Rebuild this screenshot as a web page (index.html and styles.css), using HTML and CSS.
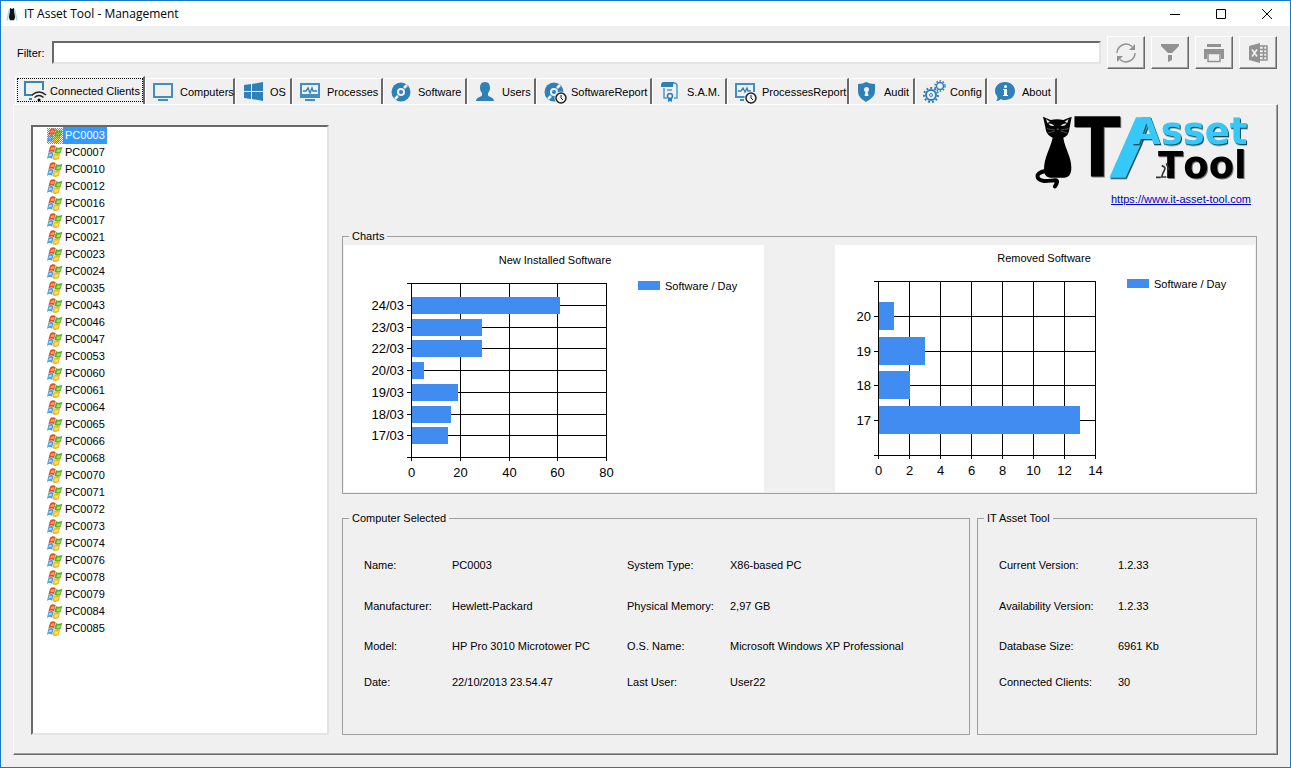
FILE: index.html
```html
<!DOCTYPE html>
<html lang="en">
<head>
<meta charset="utf-8">
<title>IT Asset Tool - Management</title>
<link rel="stylesheet" href="styles.css">
<script src="app.js" defer></script>
</head>
<body>
<svg class="defs" width="0" height="0" aria-hidden="true">
  <defs>
    <symbol id="flag" viewBox="0 0 48 48">
      <path fill="#e0501f" d="M9 5c6-5 12-5 17-1l-5 18c-5-4-11-3-17 1z"/>
      <path fill="#55b020" d="M27 6c6 4 12 3 19-1l-5 18c-7 5-13 4-19 0z"/>
      <path fill="#4a9be0" d="M4 24c6-4 11-4 16-1l-5 18c-5-4-10-3-15 1z"/>
      <path fill="#f5b81c" d="M21 25c6 3 12 3 19-1l-5 17c-7 5-13 5-19 1z"/>
      <path fill="#f7a37c" d="M12 9c4-3 7-3 11-1l-2 7c-4-2-8-1-11 1z"/>
      <path fill="#a9e05a" d="M31 13c4 1 7 1 11-1l-3 8c-4 2-7 2-11 1z"/>
      <path fill="#a8d8f8" d="M6 28c3-2 6-2 9-1l-2 7c-4-1-6-1-9 1z"/>
      <path fill="#fce27a" d="M24 31c4 1 7 1 11-1l-3 8c-4 2-7 2-10 1z"/>
    </symbol>
    <pattern id="dither" width="2" height="2" patternUnits="userSpaceOnUse">
      <path fill="#3399ff" d="M0 0h1v1H0zM1 1h1v1H1z"/>
    </pattern>
  </defs>
</svg>
<div class="window">
  <header class="titlebar">
    <svg class="app-icon" viewBox="0 0 36 42" aria-hidden="true"><path fill="none" stroke="#a9dcf2" stroke-width="5" d="M11 6 3 40M25 6l8 34"/><path fill="#111" d="M12 2l4 3h4l4-3v10c0 5 3 10 3 20l-3 8H12l-3-8c0-10 3-15 3-20z"/></svg>
    <h1>IT Asset Tool - Management</h1>
    <button class="sys" aria-label="Minimize"><svg viewBox="0 0 12 12"><path d="M1 6.5h10"/></svg></button>
    <button class="sys" aria-label="Maximize"><svg viewBox="0 0 12 12"><path d="M1.500 1.500h9v9h-9z"/></svg></button>
    <button class="sys" aria-label="Close"><svg viewBox="0 0 12 12"><path d="M1 1l10 10M11 1 1 11"/></svg></button>
  </header>

  <div class="filter">
    <label for="filter">Filter:</label>
    <input id="filter" type="text">
    <button class="tool" aria-label="Refresh"><svg viewBox="0 0 24 24"><g fill="none" stroke="#929292" stroke-width="1.500"><path d="M3 12a9 9 0 0 1 15-6.500"/><path d="M21 12a9 9 0 0 1-15 6.500"/></g><path fill="#929292" d="M21 3v6h-6zM3 21v-6h6z"/></svg></button>
    <button class="tool" aria-label="Filter"><svg viewBox="0 0 24 24"><path fill="#929292" d="M3 3h18v2l-7 7h-4L3 5zM10 14h4v5l-4 2z"/></svg></button>
    <button class="tool" aria-label="Print"><svg viewBox="0 0 24 24"><path fill="#929292" d="M5 3h14v3H5zM2 8h20v10h-3v-5H5v5H2z"/><path fill="none" stroke="#929292" stroke-width="1.500" d="M6 12.500h12v8H6z"/></svg></button>
    <button class="tool" aria-label="Export to Excel"><svg viewBox="0 0 24 24"><path fill="#929292" d="M3 5l11-3v20L3 19z"/><path fill="none" stroke="#929292" stroke-width="1.500" d="M14 5h7v14h-7M14 8.500h7M14 12h7M14 15.500h7M17.500 5v14"/><path stroke="#f0f0f0" stroke-width="1.700" d="M6 8.500l5 7M11 8.500l-5 7"/></svg></button>
  </div>

  <div class="tabs" role="tablist">
    <button class="tab active" role="tab" aria-selected="true"><svg viewBox="0 0 24 24"><path fill="none" stroke="#3585b8" stroke-width="2" d="M10 16H2V3h18v8"/><path fill="#3585b8" d="M6 19h3v2H6z"/><path fill="none" stroke="#222" stroke-width="1.500" d="M9 16q7-6 14 0M11.500 18.500q4.500-4 9 0"/><circle cx="16" cy="21" r="1.500"/></svg>Connected Clients</button>
    <button class="tab" role="tab"><svg viewBox="0 0 24 24"><path fill="none" stroke="#3f8fc2" stroke-width="2" d="M1 4h18v13H1z"/><path fill="#3f8fc2" d="M5 19h10v2H5z"/></svg>Computers</button>
    <button class="tab" role="tab"><svg viewBox="0 0 24 24"><path fill="#2e80b6" d="M1 5l7-1v7H1zM9 4l11-2v9H9zM1 12h7v7l-7-1zM9 12h11v9L9 19z"/></svg>OS</button>
    <button class="tab" role="tab"><svg viewBox="0 0 24 24"><path fill="none" stroke="#3f8fc2" stroke-width="2" d="M1 4h18v13H1z"/><path fill="none" stroke="#2e80b6" stroke-width="1.300" d="M3 11h3l2-3 2 5 2-5 1 3h4"/><path fill="#3f8fc2" d="M5 19h10v2H5zM1 14h18v2H1z"/></svg>Processes</button>
    <button class="tab" role="tab"><svg viewBox="0 0 24 24"><circle cx="10" cy="12" r="9.500" fill="#2e80b6"/><circle cx="10" cy="12" r="3" fill="none" stroke="#f0f0f0" stroke-width="2"/><path fill="none" stroke="#f0f0f0" stroke-width="2.500" d="M13 8l3-3M7 16l-3 3"/></svg>Software</button>
    <button class="tab" role="tab"><svg viewBox="0 0 24 24"><path fill="#2e80b6" d="M10 2c4 0 5 3 5 6 0 2-1 4-2 5v2c0 2 6 2 6 6H1c0-4 6-4 6-6v-2C6 12 5 10 5 8c0-3 1-6 5-6z"/></svg>Users</button>
    <button class="tab" role="tab"><svg viewBox="0 0 24 24"><circle cx="10" cy="12" r="9.500" fill="#2e80b6"/><circle cx="10" cy="12" r="3" fill="none" stroke="#f0f0f0" stroke-width="2"/><path fill="none" stroke="#f0f0f0" stroke-width="2.500" d="M13 8l3-3M7 16l-3 3"/><circle cx="17" cy="18" r="6.500" fill="#f0f0f0"/><circle cx="17" cy="18" r="5" fill="#f0f0f0" stroke="#222" stroke-width="1.500"/><path fill="none" stroke="#222" d="M17 15v3l2 2"/></svg>SoftwareReport</button>
    <button class="tab" role="tab"><svg viewBox="0 0 24 24"><path fill="#2e80b6" d="M3 2h12c-2 1-2 3-2 5H1c0-3 0-4 2-5z"/><path fill="none" stroke="#4b9ac9" stroke-width="1.500" d="M14 3c2 0 3 1 3 3v12h-3M4 8v10h3M7 10h5"/><circle cx="10" cy="16" r="2.500" fill="none" stroke="#2e80b6" stroke-width="1.500"/><path fill="#2e80b6" d="M8 18h4v4l-2-1-2 1z"/></svg>S.A.M.</button>
    <button class="tab" role="tab"><svg viewBox="0 0 24 24"><path fill="none" stroke="#3f8fc2" stroke-width="2" d="M10 17H1V4h18v8"/><path fill="none" stroke="#2e80b6" stroke-width="1.300" d="M3 11h3l2-3 2 4 2-4 1 3h3"/><path fill="#3f8fc2" d="M5 19h4v2H5z"/><circle cx="16" cy="18" r="6.500" fill="#f0f0f0"/><circle cx="16" cy="18" r="5" fill="#f0f0f0" stroke="#222" stroke-width="1.500"/><path fill="none" stroke="#222" d="M16 15v3l2 2"/></svg>ProcessesReport</button>
    <button class="tab" role="tab"><svg viewBox="0 0 24 24"><path fill="#2e80b6" d="M1 4q5 0 8-2 4 2 9 2v7c0 5-4 8-9 11-5-3-8-6-8-11z"/><circle cx="9.500" cy="9.500" r="2.500" fill="#f0f0f0"/><path fill="#f0f0f0" d="M8.500 11h2l1 5h-4z"/></svg>Audit</button>
    <button class="tab" role="tab"><svg viewBox="0 0 24 24"><g fill="none" stroke="#2e80b6"><circle cx="8" cy="15" r="5" stroke-width="2"/><circle cx="8" cy="15" r="7" stroke-width="2" stroke-dasharray="2 2"/><circle cx="8" cy="15" r="1.500" stroke-width="1"/><circle cx="17" cy="6" r="3.500" stroke-width="1.500"/><circle cx="17" cy="6" r="5" stroke-width="1.500" stroke-dasharray="1.600 1.600"/></g></svg>Config</button>
    <button class="tab" role="tab"><svg viewBox="0 0 24 24"><path fill="#2e80b6" d="M10 2c6 0 10 4 10 9s-4 9-10 9c-2 0-3 0-4-1-1 1-3 2-5 2 1-1 2-3 1-5-1-1-2-3-2-5 0-5 4-9 10-9z"/><circle cx="10.500" cy="6.500" r="1.500" fill="#fff"/><path fill="#fff" d="M8 9h4v6h1v1H8v-1h1v-5H8z"/></svg>About</button>
  </div>

  <main class="panel">
    <ul class="clients" id="clients"></ul>
    <div class="details">
      <div class="brand">
        <svg class="logo" viewBox="45 339 654 228" role="img" aria-label="IT Asset Tool">
          <path d="M75 350l23 10q19-5 38 0l25-10-7 38q-2 20-18 25c4 32 24 55 24 90 0 20-8 29-22 30H98c-12-1-20-9-20-24 0-38 18-60 26-96-15-6-21-18-22-32z"/>
          <path fill="none" stroke="#000" stroke-width="12" stroke-linecap="round" d="M82 513c-32 6-29 26-4 30 16 2 42-8 39 3-1 5-2 8-6 13"/>
          <path fill="#e8e8e8" d="M91 371q10-2 18 7-12 2-18-7zM128 378q8-9 18-7-6 9-18 7zM84 357l12 8-8 4zM152 357l-12 8 8 4z"/>
          <path fill="none" stroke="#999" stroke-width="1.500" d="M116 387h6l-3 3zM110 390l-24-4M110 393l-20 6M128 390l24-4M128 393l20 6"/>
          <text class="logo-t" x="164" y="532">T</text>
          <path class="logo-blue" d="M274 533h49l46-101 30-80h-45z"/>
          <text class="logo-word logo-blue" x="342" y="431">Asset</text>
          <text class="logo-word" x="420" y="533">Tool</text>
          <path fill="none" stroke="#333" stroke-width="5" d="M431 497q14 4 8 14t-8 20h14M414 532h14M445 490l8 20"/>
        </svg>
        <a href="https://www.it-asset-tool.com">https://www.it-asset-tool.com</a>
      </div>

      <fieldset class="group charts">
        <legend>Charts</legend>
        <svg class="chart" id="installed" viewBox="0 0 420 247" role="img" aria-label="New Installed Software"></svg>
        <svg class="chart" id="removed" viewBox="0 0 420 247" role="img" aria-label="Removed Software"></svg>
      </fieldset>

      <div class="info">
        <fieldset class="group">
          <legend>Computer Selected</legend>
          <dl class="facts computer">
            <dt>Name:</dt><dd>PC0003</dd><dt>System Type:</dt><dd>X86-based PC</dd>
            <dt>Manufacturer:</dt><dd>Hewlett-Packard</dd><dt>Physical Memory:</dt><dd>2,97 GB</dd>
            <dt>Model:</dt><dd>HP Pro 3010 Microtower PC</dd><dt>O.S. Name:</dt><dd>Microsoft Windows XP Professional</dd>
            <dt>Date:</dt><dd>22/10/2013 23.54.47</dd><dt>Last User:</dt><dd>User22</dd>
          </dl>
        </fieldset>
        <fieldset class="group">
          <legend>IT Asset Tool</legend>
          <dl class="facts tool-info">
            <dt>Current Version:</dt><dd>1.2.33</dd>
            <dt>Availability Version:</dt><dd>1.2.33</dd>
            <dt>Database Size:</dt><dd>6961 Kb</dd>
            <dt>Connected Clients:</dt><dd>30</dd>
          </dl>
        </fieldset>
      </div>
    </div>
  </main>
</div>
</body>
</html>
```

FILE: styles.css
```css
* { box-sizing: border-box; }
body {
  margin: 0;
  background: #f0f0f0;
  color: #000;
  font: 11px/14px "Liberation Sans", Arial, sans-serif;
}
button, input { font: inherit; color: inherit; }
.defs { position: absolute; }

.window {
  display: flex;
  flex-direction: column;
  min-height: 100vh;
  border: 1px solid #1979ca;
  padding-bottom: 12px;
}

.titlebar {
  display: flex;
  align-items: center;
  height: 25px;
  padding-left: 5px;
  background: #fff;
}
.app-icon { width: 12px; height: 14px; }
.titlebar h1 {
  flex: 1;
  margin: 0 0 0 6px;
  font: 12px/16px "Open Sans", "Noto Sans", sans-serif;
}
.sys {
  width: 46px;
  height: 25px;
  padding: 0;
  border: 0;
  background: none;
}
.sys svg {
  display: block;
  width: 12px;
  height: 12px;
  margin: 0 auto;
  fill: none;
  stroke: #000;
}

.filter {
  display: flex;
  align-items: center;
  gap: 6px;
  padding: 10px 13px 7px 16px;
}
.filter label { width: 29px; }
.filter input {
  flex: 1;
  min-width: 0;
  height: 23px;
  border: 2px solid;
  border-color: #696969 #e3e3e3 #e3e3e3 #696969;
  background: #fff;
}
.tool {
  width: 38px;
  height: 33px;
  padding: 0;
  border: 1px solid;
  border-color: #fff #696969 #696969 #fff;
  box-shadow: inset -1px -1px #a0a0a0;
  background: #f0f0f0;
}
.tool svg { display: block; width: 24px; height: 24px; margin: 0 auto; }

.tabs {
  display: grid;
  grid-template-columns: 130px 90px 57px 91px 84px 69px 116px 75px 122px 66px 72px 70px;
  align-items: end;
  padding-left: 14px;
}
.tab {
  display: flex;
  align-items: center;
  gap: 3px;
  height: 26px;
  padding: 0 0 0 7px;
  border: 1px solid #fff;
  border-right: 2px solid #696969;
  border-bottom: 0;
  border-radius: 2px 0 0 0;
  background: #f0f0f0;
  white-space: nowrap;
}
.tab svg { flex: none; width: 24px; height: 24px; }
.tab.active {
  height: 28px;
  outline: 1px dotted #000;
  outline-offset: -3px;
}

.panel {
  display: flex;
  flex: 1;
  gap: 13px;
  margin: 0 12px;
  padding: 0 20px 19px 17px;
  border: 1px solid #fff;
  border-right-color: #696969;
  border-bottom-color: #696969;
  box-shadow: inset -1px -1px #a0a0a0;
}

.clients {
  width: 298px;
  margin: 20px 0 0;
  padding: 0 0 0 14px;
  list-style: none;
  background: #fff;
  border: 2px solid;
  border-color: #696969 #e3e3e3 #e3e3e3 #696969;
}
.client {
  display: flex;
  align-items: center;
  height: 17px;
  padding: 0;
  border: 0;
  background: none;
}
.client svg { width: 16px; height: 16px; }
.client span { height: 17px; padding: 0 2px; line-height: 17px; }
.client.selected span { background: #3399ff; color: #fff; }

.details {
  display: flex;
  flex: 1;
  flex-direction: column;
  min-width: 0;
}
.brand {
  display: flex;
  flex-direction: column;
  align-items: flex-end;
  gap: 3px;
  padding: 8px 6px 23px 0;
}
.logo { width: 218px; height: 76px; }
.logo-t,
.logo-word {
  filter: drop-shadow(3px 3px 0 #777);
}
.logo-t { font: bold 255px "Open Sans", sans-serif; }
.logo-word { font: bold 111px "DejaVu Sans", sans-serif; font-kerning: none; }
.logo-blue { fill: #35c8f8; filter: drop-shadow(3px 4px 0 #174b5c); }
.brand a { color: #00c; }

.group {
  min-width: 0;
  margin: 0;
  padding: 0;
  border: 1px solid #a0a0a0;
}
.group legend { margin-left: 6px; padding: 0 3px; }
.charts {
  display: flex;
  justify-content: space-between;
  margin-bottom: 17px;
  padding: 2px 0 1px;
}
.chart { width: 420px; height: 247px; margin: 0 1px; background: #fff; }
.chart text { font-size: 11px; }
.chart .tick { font-size: 13px; }
.chart .row-label { text-anchor: end; }
.chart .col-label, .chart .title { text-anchor: middle; }
.chart .grid { fill: none; stroke: #000; }
.chart .bar { fill: #418cf0; }

.info {
  display: grid;
  flex: 1;
  grid-template-columns: 628fr 280fr;
  gap: 7px;
}
.facts {
  display: grid;
  grid-template-rows: 42px 40px 40px 32px;
  align-items: center;
  margin: 0;
  padding: 19px 0 0 21px;
  white-space: nowrap;
}
.facts dd { margin: 0; }
.computer { grid-template-columns: 88px 175px 103px 1fr; }
.tool-info { grid-template-columns: 119px 1fr; }
```

FILE: app.js
```js
const numbers = ["03", "07", "10", "12", "16", "17", "21", "23", "24", "35", "43", "46", "47", "53", "60",
  "61", "64", "65", "66", "68", "70", "71", "72", "73", "74", "76", "78", "79", "84", "85"];

document.getElementById("clients").innerHTML = numbers.map((n, i) => {
  const selected = i === 0;
  const shade = selected ? '<g transform="scale(3)"><rect width="16" height="16" fill="url(#dither)"/></g>' : "";
  return `<li><button class="client${selected ? " selected" : ""}"><svg viewBox="0 0 48 48" aria-hidden="true"><use href="#flag"/>${shade}</svg><span>PC00${n}</span></button></li>`;
}).join("");

function drawChart(id, c) {
  const right = c.left + c.width;
  const bottom = c.top + c.height;
  const step = c.height / (c.rows.length + 1);
  const snap = v => Math.round(v) + 0.5;
  let lines = "";
  let labels = "";
  let bars = "";
  for (let v = 0; v <= c.max; v += c.tick) {
    const x = snap(c.left + c.width * v / c.max);
    lines += `M${x} ${c.top}V${bottom + 4}`;
    labels += `<text class="tick col-label" x="${x}" y="${bottom + 20}">${v}</text>`;
  }
  [0, ...c.rows.map((r, i) => i + 1), c.rows.length + 1].forEach(i => {
    lines += `M${c.left - 4} ${snap(c.top + step * i)}H${right + 1}`;
  });
  c.rows.forEach(([name, value], i) => {
    const y = Math.round(c.top + step * (i + 1));
    const h = Math.round(step * 0.8);
    labels += `<text class="tick row-label" x="${c.left - 7}" y="${y + 5}">${name}</text>`;
    bars += `<rect class="bar" x="${c.left + 1}" y="${Math.round(y - h / 2)}" width="${Math.floor(c.width * value / c.max)}" height="${h}"/>`;
  });
  document.getElementById(id).innerHTML =
    `<text class="title" x="${c.titleX}" y="${c.top - 19}">${c.title}</text>` +
    `<path class="grid" d="${lines}"/>${bars}${labels}` +
    `<rect class="bar" x="${c.legendX}" y="${c.top - 2}" width="22" height="9"/>` +
    `<text x="${c.legendX + 27}" y="${c.top + 7}">Software / Day</text>`;
}

drawChart("installed", {
  title: "New Installed Software", titleX: 211, legendX: 294,
  left: 67, top: 38, width: 195, height: 174, max: 80, tick: 20,
  rows: [["24/03", 61], ["23/03", 29], ["22/03", 29], ["20/03", 5], ["19/03", 19], ["18/03", 16], ["17/03", 15]]
});
drawChart("removed", {
  title: "Removed Software", titleX: 209, legendX: 292,
  left: 43, top: 36, width: 217, height: 174, max: 14, tick: 2,
  rows: [["20", 1], ["19", 3], ["18", 2], ["17", 13]]
});
```
